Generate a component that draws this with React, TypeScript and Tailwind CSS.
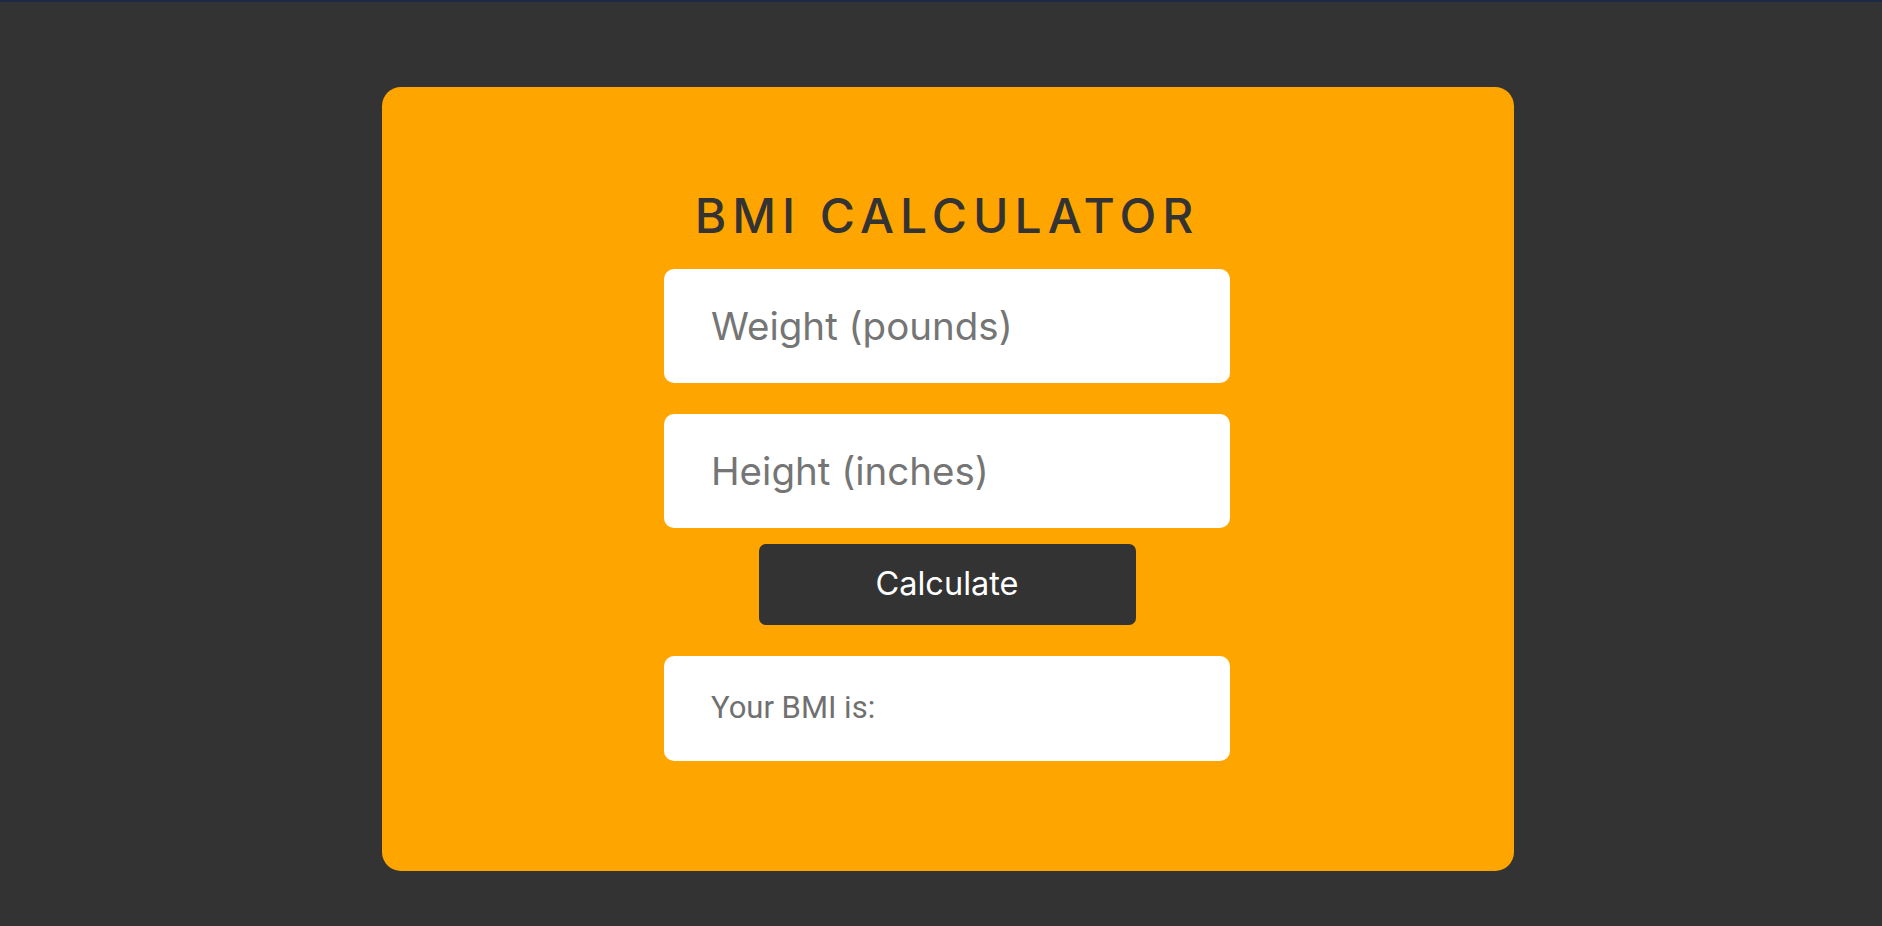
export default function App() {
    return (
        <div className="min-h-screen bg-[#333333] font-['Inter',sans-serif]">
            <div className="h-[2px] bg-[#1d2a45]" />
            <div className="ml-[382px] mt-[85px] h-[784px] w-[1132px] rounded-[19px] bg-[#ffa500] pl-[282px] pt-[105px]">
                <div className="flex w-[566px] flex-col">
                    <h1 className="whitespace-nowrap text-center text-[48px] font-medium leading-none tracking-[6px] text-[#333333]">
                        BMI CALCULATOR
                    </h1>
                    <input
                        type="number"
                        placeholder="Weight (pounds)"
                        className="mt-[29px] h-[114px] w-full rounded-[10px] bg-white pl-[47px] text-[38.5px] text-[#333333] outline-none placeholder:text-[#757575]"
                    />
                    <input
                        type="number"
                        placeholder="Height (inches)"
                        className="mt-[31px] h-[114px] w-full rounded-[10px] bg-white pl-[47px] text-[38.5px] text-[#333333] outline-none placeholder:text-[#757575]"
                    />
                    <button className="mx-auto mt-[16px] h-[81px] w-[377px] rounded-[7px] bg-[#333333] text-[32.5px] text-white">
                        Calculate
                    </button>
                    <div className="mt-[31px] flex h-[105px] items-center rounded-[10px] bg-white pl-[47px] font-['Roboto',sans-serif] text-[31px] text-[#707070]">
                        Your BMI is:
                    </div>
                </div>
            </div>
        </div>
    );
}
